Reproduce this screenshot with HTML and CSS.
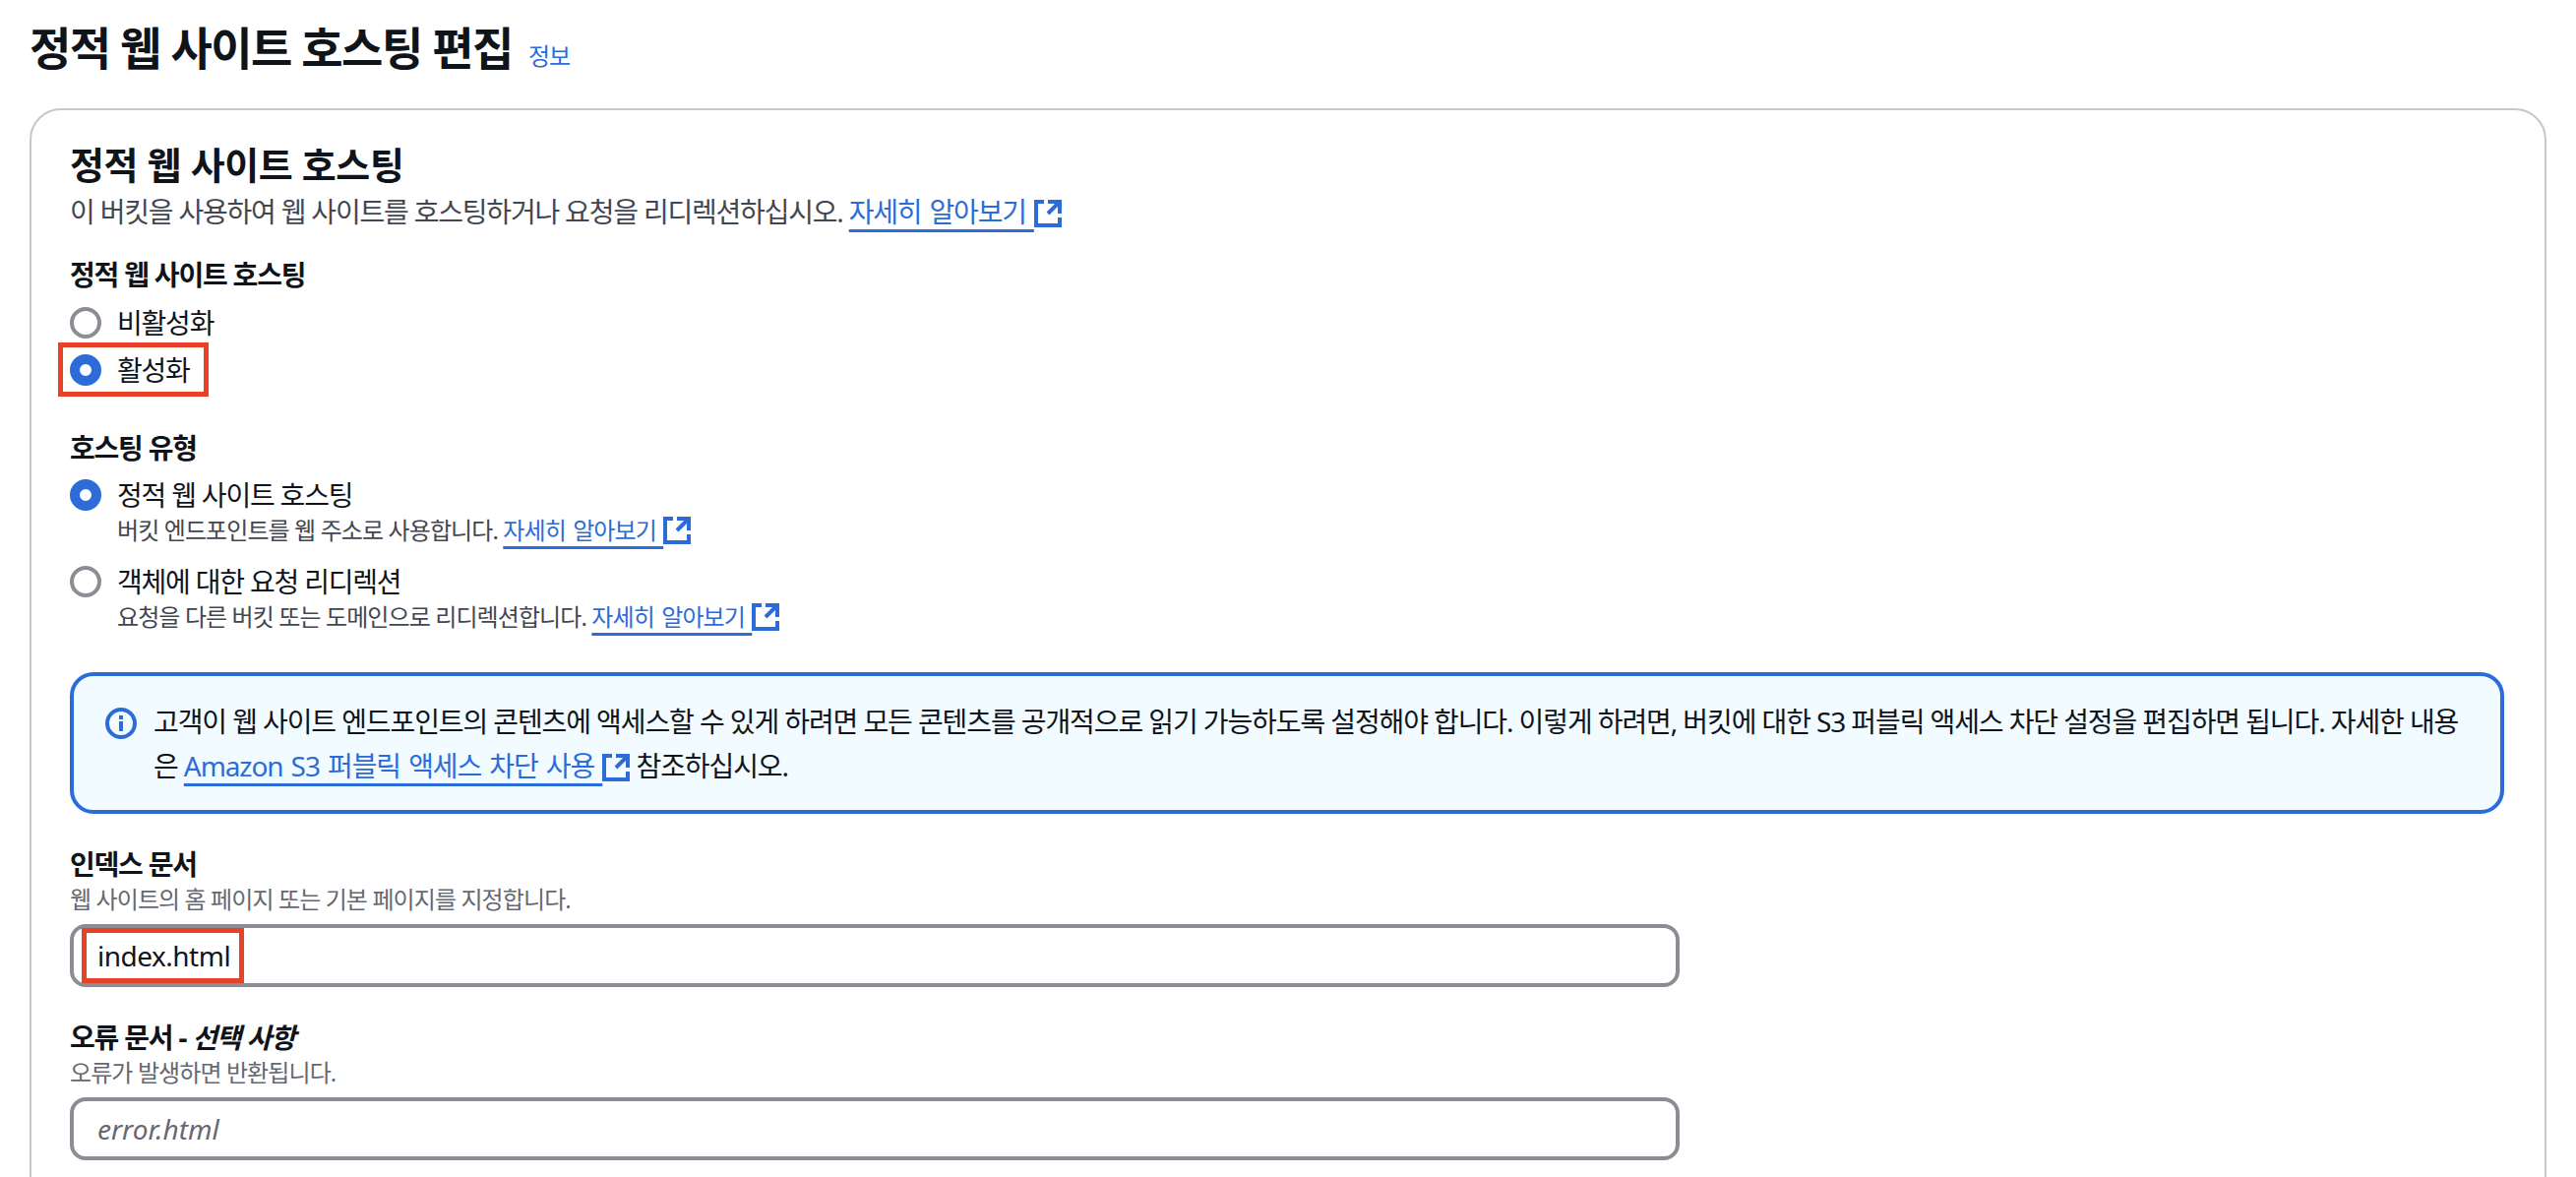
FILE: index.html
```html
<!DOCTYPE html>
<html lang="ko">
<head>
	<meta charset="UTF-8">
	<title>정적 웹 사이트 호스팅 편집</title>
	<link rel="stylesheet" href="styles.css">
</head>
<body>
	<svg class="sprite" width="0" height="0">
		<symbol id="ext" viewBox="1 1 14 14">
			<path d="M14 8V2H8M14 2 8 8"/>
			<path d="M6 2H2v12h12v-4"/>
		</symbol>
	</svg>

	<div class="page-head">
		<h1>정적 웹 사이트 호스팅 편집</h1>
		<a class="info-link" href="#">정보</a>
	</div>

	<div class="card">
		<h2>정적 웹 사이트 호스팅</h2>
		<p class="sub">이 버킷을 사용하여 웹 사이트를 호스팅하거나 요청을 리디렉션하십시오. <a class="ext" href="#"><span>자세히 알아보기 </span><svg class="ext-icon"><use href="#ext"/></svg></a></p>

		<div class="label label-first">정적 웹 사이트 호스팅</div>
		<div class="radios">
			<div class="radio-row"><i class="radio"></i><span>비활성화</span></div>
			<div class="radio-row"><i class="radio on"></i><span>활성화</span><b class="mark mark-radio"></b></div>
		</div>

		<div class="label label-type">호스팅 유형</div>
		<div class="option">
			<div class="radio-row"><i class="radio on"></i><span>정적 웹 사이트 호스팅</span></div>
			<p class="opt-desc">버킷 엔드포인트를 웹 주소로 사용합니다. <a class="ext" href="#"><span>자세히 알아보기 </span><svg class="ext-icon"><use href="#ext"/></svg></a></p>
		</div>
		<div class="option">
			<div class="radio-row"><i class="radio"></i><span>객체에 대한 요청 리디렉션</span></div>
			<p class="opt-desc">요청을 다른 버킷 또는 도메인으로 리디렉션합니다. <a class="ext" href="#"><span>자세히 알아보기 </span><svg class="ext-icon"><use href="#ext"/></svg></a></p>
		</div>

		<div class="notice">
			<svg class="notice-icon" viewBox="0 0 32 32">
				<circle cx="16" cy="16" r="14"/>
				<path d="M16 14v10M16 8v4"/>
			</svg>
			<p>고객이 웹 사이트 엔드포인트의 콘텐츠에 액세스할 수 있게 하려면 모든 콘텐츠를 공개적으로 읽기 가능하도록 설정해야 합니다. 이렇게 하려면, 버킷에 대한 S3 퍼블릭 액세스 차단 설정을 편집하면 됩니다. 자세한 내용<br>은 <a class="ext" href="#"><span>Amazon S3 퍼블릭 액세스 차단 사용 </span><svg class="ext-icon"><use href="#ext"/></svg></a> 참조하십시오.</p>
		</div>

		<div class="label label-field">인덱스 문서</div>
		<p class="field-desc">웹 사이트의 홈 페이지 또는 기본 페이지를 지정합니다.</p>
		<div class="input">index.html<b class="mark mark-input"></b></div>

		<div class="label label-field">오류 문서 - <em>선택 사항</em></div>
		<p class="field-desc">오류가 발생하면 반환됩니다.</p>
		<div class="input placeholder">error.html</div>
	</div>
</body>
</html>
```

FILE: styles.css
```css
*{margin: 0;padding: 0;box-sizing: border-box;}
html,body{
	height: 1196px;
	overflow: hidden;
}
body{
	padding: 0 30px;
	background: #fff;
	color: #0f141a;
	font-family: "Noto Sans", "Noto Sans CJK KR", sans-serif;
	font-size: 28px;
	line-height: 40px;
	letter-spacing: -1.2px;
}
a{color: #2b6cd9;text-decoration: none;}
.sprite{position: absolute;}

.page-head{
	display: flex;
	align-items: baseline;
	gap: 16px;
	height: 96px;
	line-height: 96px;
	margin-bottom: 14px;
}
h1{
	font-size: 46px;
	font-weight: 700;
	letter-spacing: -1.5px;
}
.info-link{
	font-size: 24px;
	letter-spacing: -1px;
}

.card{
	height: 1200px;
	border: 2px solid #c6c6cd;
	border-radius: 32px;
	padding: 31px 41px 0 39px;
}
h2{
	font-size: 38px;
	font-weight: 700;
	line-height: 48px;
	letter-spacing: -.4px;
}
.sub{
	margin-top: 4px;
	color: #424650;
}
.ext span{
	text-decoration: underline;
	text-decoration-thickness: 3px;
	text-underline-offset: 7px;
	text-decoration-skip-ink: none;
	white-space: pre;
	word-spacing: 2px;
}
.ext-icon{
	width: 28px;
	height: 28px;
	vertical-align: -5px;
	fill: none;
	stroke: #2b6cd9;
	stroke-width: 2;
}

.label{font-weight: 700;}
.label em{font-style: italic;}
.label-first{margin-top: 24px;}
.label-type{margin-top: 39px;}
.label-field{margin-top: 31px;}

.radios{
	display: flex;
	flex-direction: column;
	gap: 8px;
	margin-top: 9px;
}
.radio-row{
	position: relative;
	display: flex;
	align-items: center;
	gap: 16px;
	height: 40px;
}
.radio{
	width: 32px;
	height: 32px;
	border: 4px solid #8c8c94;
	border-radius: 50%;
}
.radio.on{border: 10px solid #2b6cd9;}

.option{margin-top: 16px;}
.label-type + .option{margin-top: 8px;}
.opt-desc{
	padding-left: 48px;
	font-size: 24px;
	line-height: 32px;
	letter-spacing: -.9px;
	color: #424650;
}

.notice{
	display: flex;
	gap: 17px;
	height: 144px;
	margin: 40px 0 0;
	padding: 24px 32px 0;
	background: #f2fbff;
	border: 4px solid #2b6cd9;
	border-radius: 24px;
}
.notice-icon{
	flex: none;
	width: 32px;
	height: 32px;
	margin-top: 8px;
	fill: none;
	stroke: #2b6cd9;
	stroke-width: 4;
}
.notice p{
	line-height: 45px;
	letter-spacing: -1.1px;
}

.field-desc{
	font-size: 24px;
	line-height: 32px;
	letter-spacing: -.9px;
	color: #656871;
}
.input{
	position: relative;
	width: 1636px;
	height: 64px;
	margin-top: 9px;
	padding-left: 24px;
	border: 4px solid #8c8c94;
	border-radius: 16px;
	line-height: 56px;
	letter-spacing: -.5px;
}
.input.placeholder{
	font-style: italic;
	letter-spacing: 0;
	color: #656871;
}

/* 빨간 표시 상자 */
.mark{
	position: absolute;
	border: 5px solid #e8412a;
}
.mark-radio{
	top: -8px;
	left: -12px;
	width: 153px;
	height: 55px;
}
.mark-input{
	top: 0;
	left: 8px;
	width: 165px;
	height: 56px;
}
```
